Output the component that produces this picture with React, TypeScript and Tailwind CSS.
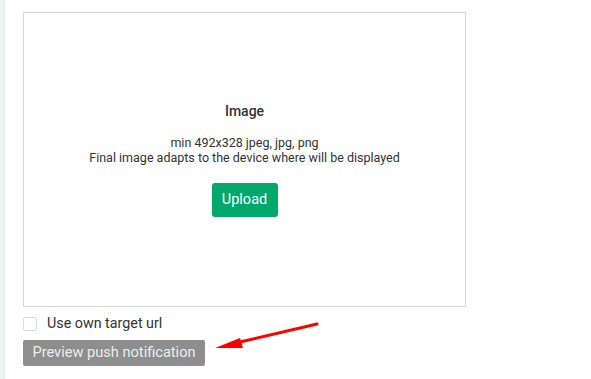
import React from "react";

export default function App() {
  return (
    <div className="flex w-[591px] h-[379px] bg-white overflow-hidden" style={{ fontFamily: "Roboto, 'Liberation Sans', sans-serif" }}>
      <div className="w-[5px] h-full bg-[#ebf6f2] border-r border-[#e2efea]" />
      <div className="relative flex-1 pl-[18px] pt-[12px]">
        <div className="w-[443px] h-[295px] border border-[#d3d7dc] flex flex-col items-center text-[#333]">
          <div className="mt-[89px] text-[14px] font-medium leading-[18px]">Image</div>
          <div className="mt-[15px] text-[12.5px] leading-[15px] text-center">
            <div>min 492x328 jpeg, jpg, png</div>
            <div>Final image adapts to the device where will be displayed</div>
          </div>
          <button className="mt-[18px] w-[66px] h-[34px] rounded-[3px] bg-[#00a86b] text-white text-[14.5px]">Upload</button>
        </div>
        <div className="mt-[10px] flex items-center h-[14px]">
          <div className="w-[14px] h-[14px] rounded-[2px] border border-[#d6dbe0] bg-white" />
          <span className="ml-[10px] text-[14.3px] text-[#333]">Use own target url</span>
        </div>
        <button className="mt-[9px] w-[182px] h-[26px] rounded-[2px] bg-[#8e8e8e] text-[#ececec] text-[14.6px]">Preview push notification</button>
        <svg className="absolute left-[195px] top-[310px]" width="130" height="50" viewBox="0 0 130 50">
          <line x1="117" y1="14" x2="36" y2="33" stroke="#f00" strokeWidth="3" strokeLinecap="round" />
          <polygon points="15,38 40,28 43,38" fill="#f00" />
        </svg>
      </div>
    </div>
  );
}
